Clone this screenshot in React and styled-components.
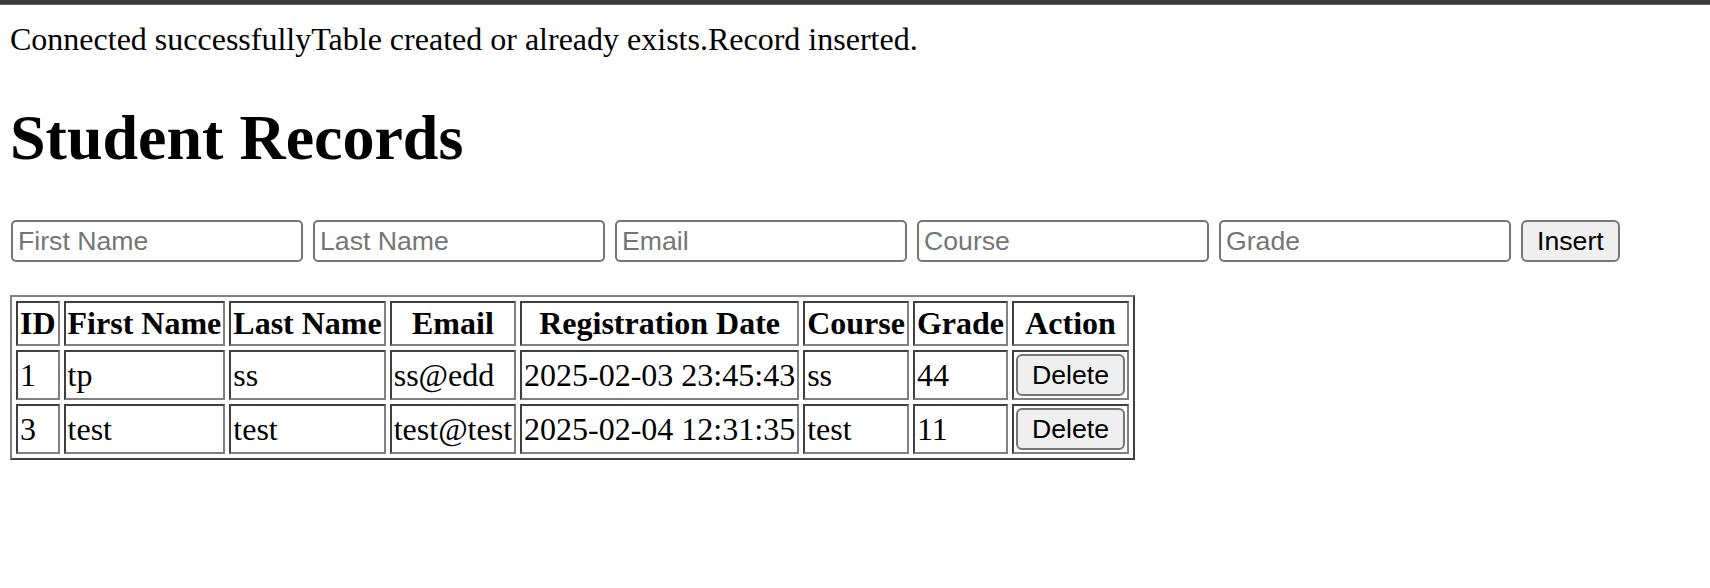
import styled, { createGlobalStyle } from "styled-components";

const GlobalStyle = createGlobalStyle`
  body {
    margin: 0;
    background: #fff;
    color: #000;
    font-family: "Liberation Serif", "Times New Roman", serif;
  }
`;

const fields = ["First Name", "Last Name", "Email", "Course", "Grade"];

const columns = [
  "ID",
  "First Name",
  "Last Name",
  "Email",
  "Registration Date",
  "Course",
  "Grade",
  "Action",
];

const students = [
  {
    id: 1,
    firstName: "tp",
    lastName: "ss",
    email: "ss@edd",
    registered: "2025-02-03 23:45:43",
    course: "ss",
    grade: "44",
  },
  {
    id: 3,
    firstName: "test",
    lastName: "test",
    email: "test@test",
    registered: "2025-02-04 12:31:35",
    course: "test",
    grade: "11",
  },
];

const App = () => (
  <>
    <GlobalStyle />
    <TopBar />
    <Page>
      <Message>
        Connected successfullyTable created or already exists.Record inserted.
      </Message>
      <Title>Student Records</Title>
      <InsertForm onSubmit={e => e.preventDefault()}>
        {fields.map(field => (
          <Field key={field} type="text" placeholder={field} />
        ))}
        <FormButton type="submit">Insert</FormButton>
      </InsertForm>
      <Records>
        <thead>
          <tr>
            {columns.map(col => (
              <HeadCell key={col}>{col}</HeadCell>
            ))}
          </tr>
        </thead>
        <tbody>
          {students.map(s => (
            <tr key={s.id}>
              <Cell>{s.id}</Cell>
              <Cell>{s.firstName}</Cell>
              <Cell>{s.lastName}</Cell>
              <Cell>{s.email}</Cell>
              <Cell>{s.registered}</Cell>
              <Cell>{s.course}</Cell>
              <Cell>{s.grade}</Cell>
              <Cell>
                <FormButton type="button" $block>
                  Delete
                </FormButton>
              </Cell>
            </tr>
          ))}
        </tbody>
      </Records>
    </Page>
  </>
);

const TopBar = styled.div`
  height: 4px;
  background: #3a3a3d;
  border-bottom: 1px solid #606064;
`;

const Page = styled.main`
  padding: 0 10px 40px;
`;

const Message = styled.p`
  margin: 16px 0 0;
  font-size: 32px;
`;

const Title = styled.h1`
  margin: 43px 0 0;
  font-size: 64px;
  font-weight: 700;
`;

const InsertForm = styled.form`
  display: flex;
  gap: 10px;
  margin: 45px 0 0 1px;
`;

const controlFont = `
  font-family: "Liberation Sans", Arial, Helvetica, sans-serif;
  font-size: 26.67px;
`;

const Field = styled.input`
  ${controlFont}
  box-sizing: border-box;
  flex: none;
  width: 292px;
  height: 42px;
  padding: 0 5px;
  border: 2px solid #767676;
  border-radius: 5px;
  background: #fff;
  color: #000;

  &::placeholder {
    color: #757575;
  }
`;

const FormButton = styled.button`
  ${controlFont}
  display: ${p => (p.$block ? "block" : "inline-block")};
  box-sizing: border-box;
  height: 42px;
  padding: 0 14px;
  border: 2px solid #767676;
  border-radius: 6px;
  background: #efefef;
  color: #000;
`;

const Records = styled.table`
  margin-top: 33px;
  border: 2px solid;
  border-color: #808080 #404040 #404040 #808080;
  border-spacing: 4px;
  font-size: 32px;
`;

const HeadCell = styled.th`
  padding: 2px;
  border: 2px solid;
  border-color: #404040 #808080 #808080 #404040;
  font-weight: 700;
  text-align: center;
`;

const Cell = styled.td`
  padding: 2px;
  border: 2px solid;
  border-color: #404040 #808080 #808080 #404040;
  text-align: left;
  vertical-align: middle;
`;

export default App;
